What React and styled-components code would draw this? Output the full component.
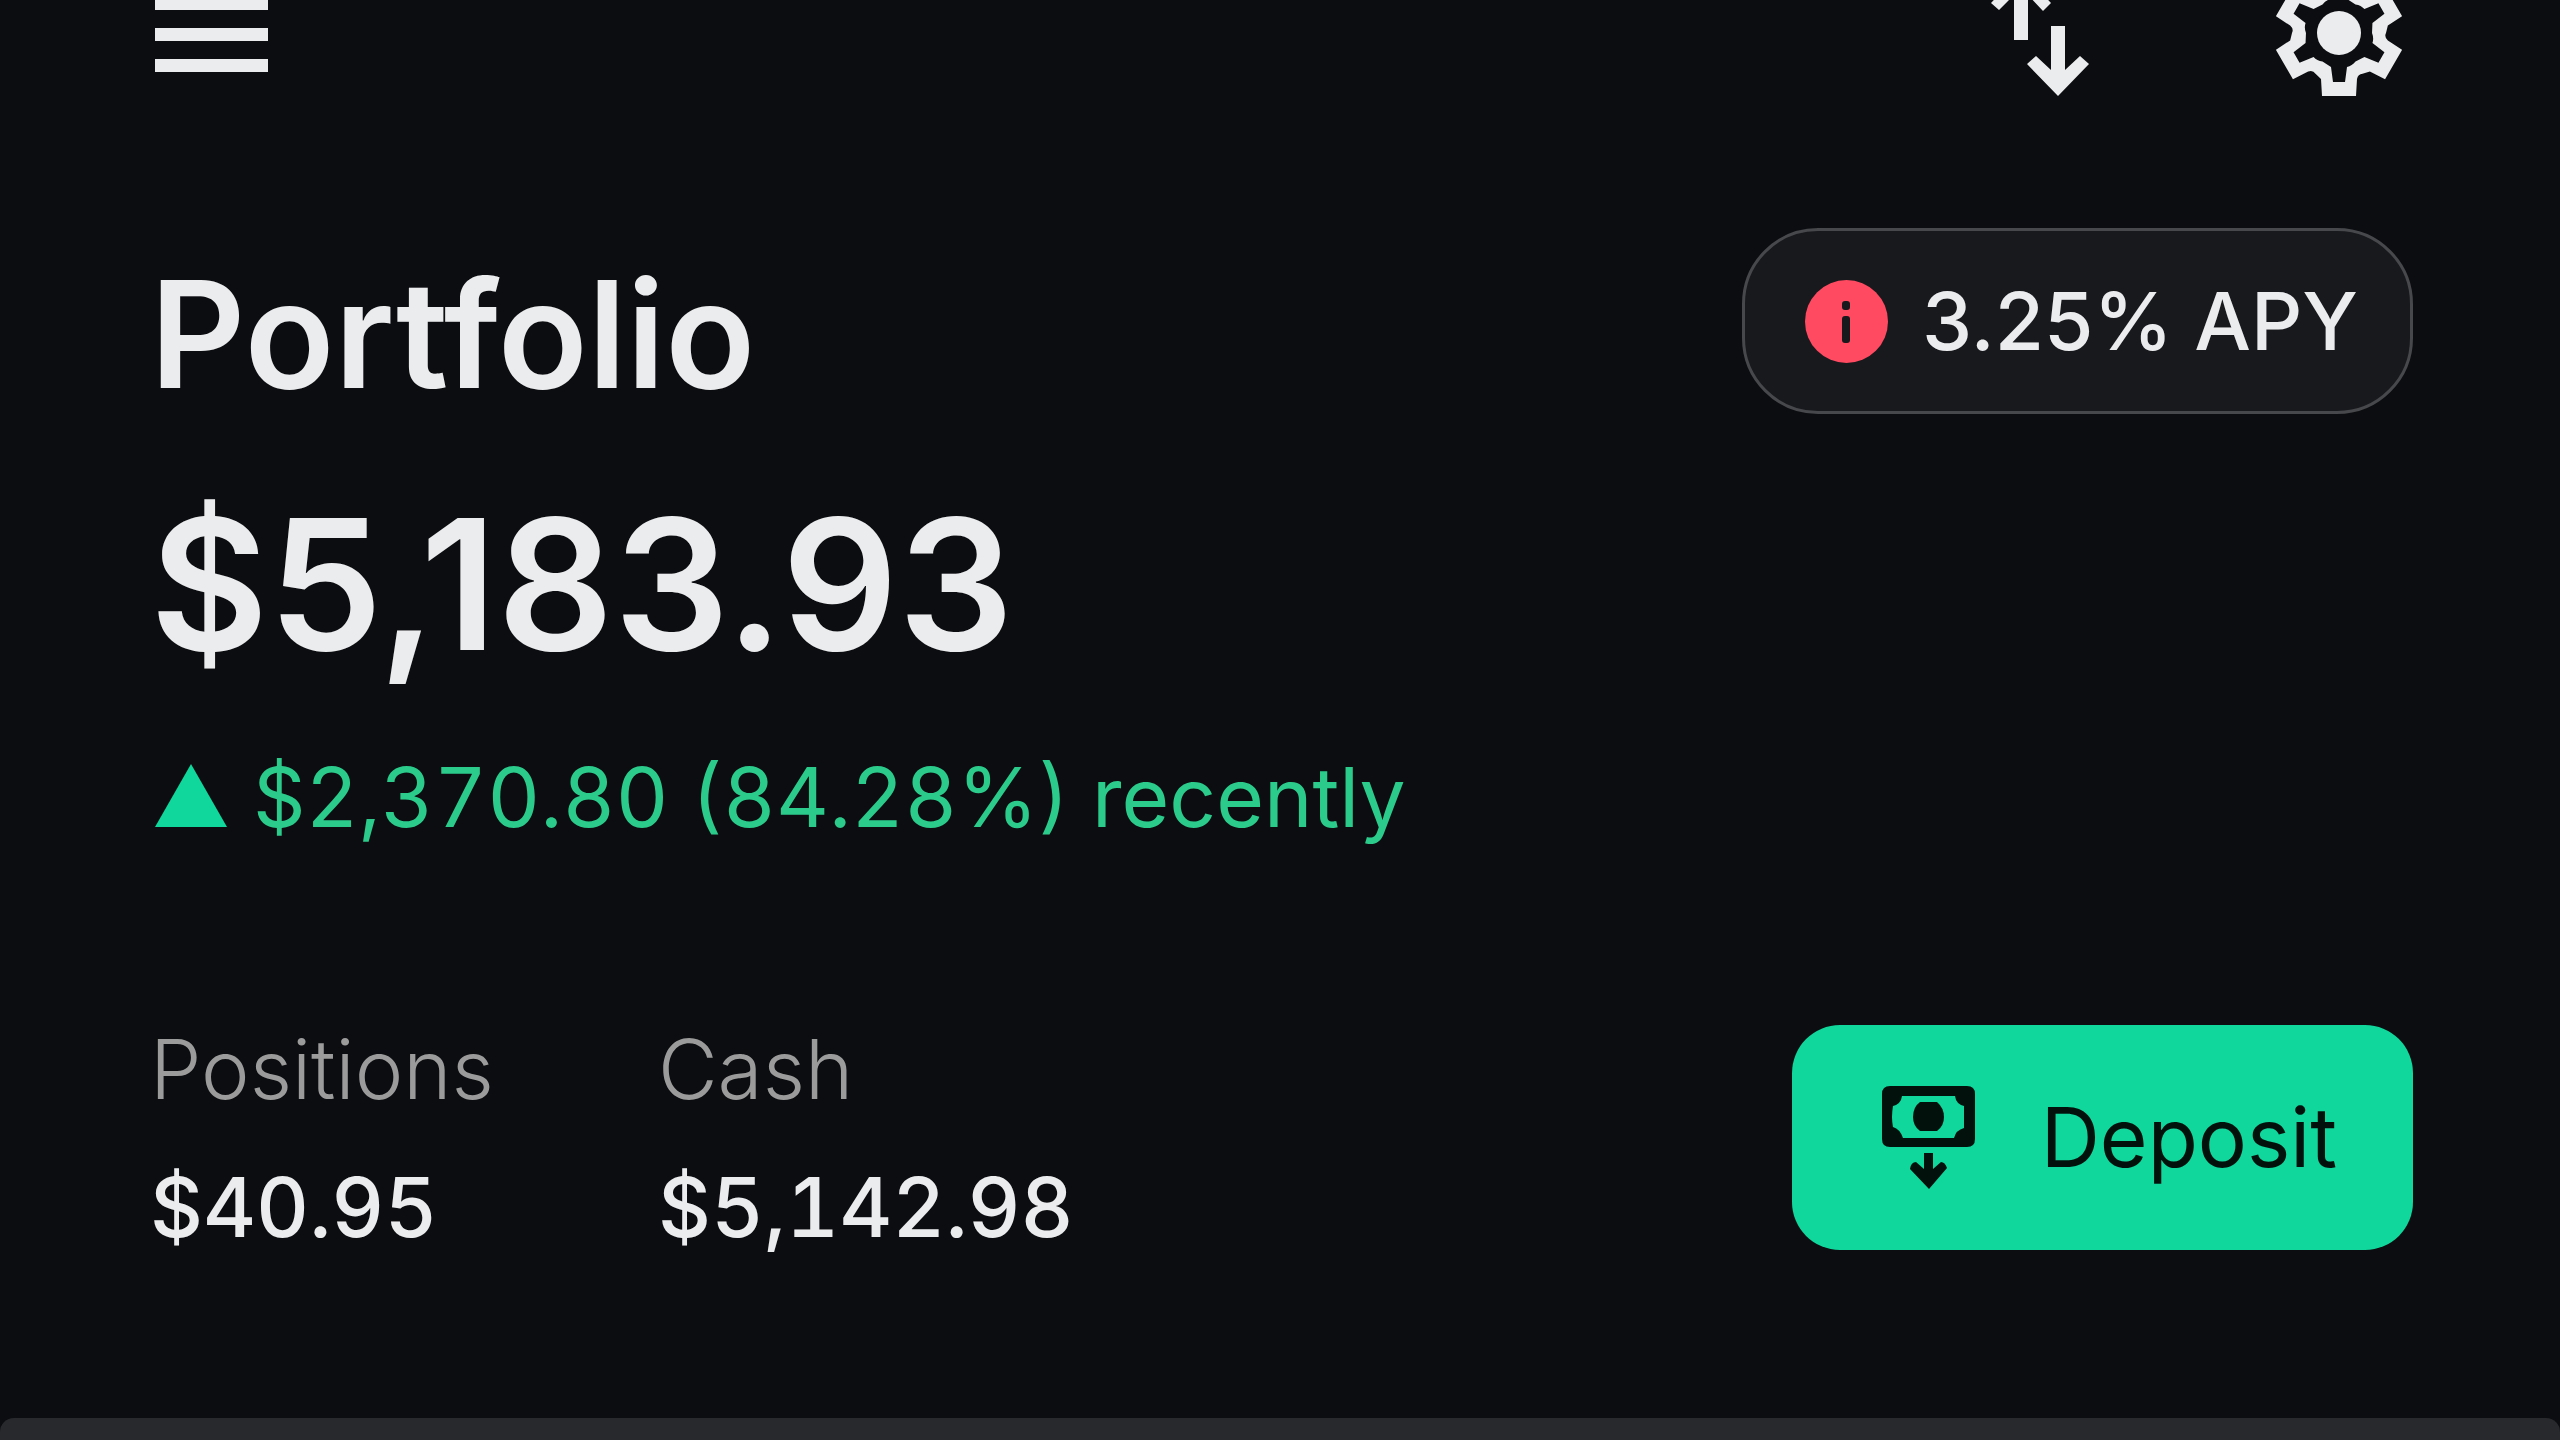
import * as React from 'react'
import styled, { createGlobalStyle } from 'styled-components'

const colors = {
  background: '#0c0d10',
  surface: '#18191d',
  border: '#47484b',
  sheet: '#28292c',
  text: '#ebecee',
  muted: '#9b9b9b',
  green: '#10d79c',
  greenText: '#2bcb8b',
  red: '#ff4a61',
  ink: '#03110c',
}

const fontSizes = {
  small: '80px',
  body: '82px',
  title: '148px',
  amount: '182px',
}

const GlobalStyle = createGlobalStyle`
  * {
    box-sizing: border-box;
  }

  body {
    margin: 0;
    background: ${colors.background};
    color: ${colors.text};
    font-family: Inter, 'Liberation Sans', sans-serif;
    overflow: hidden;
  }
`

const Page = styled.div`
  min-height: 100vh;
  display: flex;
  flex-direction: column;
`

const Header = styled.header`
  display: flex;
  justify-content: space-between;
  align-items: flex-start;
  padding: 0 158px 0 155px;
`

const HeaderActions = styled.div`
  display: flex;
  gap: 186px;
`

const IconButton = styled.button`
  display: block;
  padding: 0;
  border: 0;
  background: none;
  color: ${colors.text};
  cursor: pointer;

  svg {
    display: block;
    fill: currentColor;
  }
`

const Main = styled.main`
  flex: 1;
  padding: 132px 147px 160px 150px;
`

const Row = styled.div`
  display: flex;
  justify-content: space-between;
  align-items: flex-start;
`

const Title = styled.h1`
  margin: 0;
  font-size: ${fontSizes.title};
  font-weight: 600;
  line-height: 214px;
`

const Amount = styled.p`
  margin: 30px 0 54px;
  font-size: ${fontSizes.amount};
  font-weight: 600;
  line-height: 224px;
`

const RateButton = styled.button`
  display: flex;
  align-items: center;
  gap: 34px;
  height: 186px;
  padding: 0 52px 0 60px;
  border: 3px solid ${colors.border};
  border-radius: 76px;
  background: ${colors.surface};
  color: ${colors.text};
  font-family: inherit;
  font-size: ${fontSizes.small};
  font-weight: 500;
  line-height: 96px;
  white-space: nowrap;
  cursor: pointer;
`

const Change = styled.p`
  display: flex;
  align-items: center;
  gap: 26px;
  margin: 0 0 176px;
  padding-left: 5px;
  color: ${colors.greenText};
  font-size: ${fontSizes.body};
  font-weight: 400;
  font-variant-numeric: tabular-nums;
  line-height: 96px;
`

const Holdings = styled.dl`
  display: flex;
  gap: 164px;
  margin: 0;
  font-size: ${fontSizes.body};
  line-height: 96px;
`

const Label = styled.dt`
  color: ${colors.muted};
  font-weight: 300;
`

const Value = styled.dd`
  margin: 42px 0 0;
  font-weight: 500;
  font-variant-numeric: tabular-nums;
`

const DepositButton = styled.button`
  display: flex;
  align-items: center;
  gap: 66px;
  height: 225px;
  margin-top: 3px;
  padding: 0 76px 0 90px;
  border: 0;
  border-radius: 48px;
  background: ${colors.green};
  color: ${colors.ink};
  font-family: inherit;
  font-size: ${fontSizes.body};
  font-weight: 400;
  line-height: 96px;
  cursor: pointer;
`

const Sheet = styled.section`
  height: 22px;
  border-radius: 14px 14px 0 0;
  background: ${colors.sheet};
`

// repeats the points of one tooth around the centre
const around = points =>
  [0, 1, 2, 3, 4, 5]
    .map(step => {
      const angle = (-step * Math.PI) / 3
      const turned = points.map(([cmd, ...xy]) => {
        let out = cmd
        for (let i = 0; i < xy.length; i += 2) {
          const x = xy[i] * Math.cos(angle) - xy[i + 1] * Math.sin(angle)
          const y = xy[i] * Math.sin(angle) + xy[i + 1] * Math.cos(angle)
          out += ` ${x.toFixed(2)} ${y.toFixed(2)}`
        }
        return out
      })
      return turned.join(' ')
    })
    .join(' ')

const gearOuter = around([
  ['L', -18, 46],
  ['L', -17, 63],
  ['L', 17, 63],
  ['L', 18, 46],
  ['Q', 19, 41, 23.5, 40.7],
])

const gearInner = around([
  ['L', -8, 34],
  ['L', -6, 49],
  ['L', 6, 49],
  ['L', 8, 34],
  ['Q', 13, 33, 16.5, 28.6],
])

const MenuIcon = () => (
  <svg width="113" height="72" viewBox="0 0 113 72">
    <rect y="-3" width="113" height="13" />
    <rect y="28" width="113" height="13" />
    <rect y="59" width="113" height="13" />
  </svg>
)

const TransferIcon = () => (
  <svg width="99" height="96" viewBox="0 0 99 96">
    <path d="M23 40V-5L8 10L0 3L30 -29L60 3L52 11L37 -5V40Z" />
    <path d="M60 26H74V70L89 56L98 64L67 96L36 64L45 56L60 70Z" />
  </svg>
)

const SettingsIcon = () => (
  <svg width="126" height="96" viewBox="-63 -33 126 96">
    <path
      fillRule="evenodd"
      d={`M-23.5 40.7 ${gearOuter} Z M-16.5 28.6 ${gearInner} Z`}
    />
    <circle r="22" />
  </svg>
)

const InfoIcon = () => (
  <svg width="83" height="83" viewBox="0 0 83 83">
    <circle cx="41.5" cy="41.5" r="41.5" fill={colors.red} />
    <rect x="37" y="21" width="8" height="9" rx="3" fill={colors.surface} />
    <rect x="37" y="36" width="8" height="27" rx="3" fill={colors.surface} />
  </svg>
)

const UpIcon = () => (
  <svg width="72" height="69" viewBox="0 0 72 69">
    <path d="M36 0L72 63H0Z" fill={colors.green} />
  </svg>
)

const CashIcon = () => (
  <svg width="93" height="103" viewBox="0 0 93 103" fill="currentColor">
    <path
      fillRule="evenodd"
      d="M8 0H85Q93 0 93 8V53Q93 61 85 61H8Q0 61 0 53V8Q0 0 8 0ZM20 10Q19 18 11 20Q9 31 11 41Q18 43 21 52H72Q74 44 82 42V20Q74 18 73 10Z"
    />
    <path d="M38 16H55Q62 22 62 31Q62 40 55 45H38Q31 40 31 31Q31 21 38 16Z" />
    <path d="M42 67H51V83L59 76Q63 76 65 82L47 103L28 83Q29 76 34 76L42 83Z" />
  </svg>
)

const holdings = [
  { label: 'Positions', value: '$40.95' },
  { label: 'Cash', value: '$5,142.98' },
]

const App = () => (
  <Page>
    <GlobalStyle />
    <Header>
      <IconButton aria-label="Menu">
        <MenuIcon />
      </IconButton>
      <HeaderActions>
        <IconButton aria-label="Transfer">
          <TransferIcon />
        </IconButton>
        <IconButton aria-label="Settings">
          <SettingsIcon />
        </IconButton>
      </HeaderActions>
    </Header>
    <Main>
      <Row>
        <Title>Portfolio</Title>
        <RateButton>
          <InfoIcon />
          3.25% APY
        </RateButton>
      </Row>
      <Amount>$5,183.93</Amount>
      <Change>
        <UpIcon />
        $2,370.80 (84.28%) recently
      </Change>
      <Row>
        <Holdings>
          {holdings.map(({ label, value }) => (
            <div key={label}>
              <Label>{label}</Label>
              <Value>{value}</Value>
            </div>
          ))}
        </Holdings>
        <DepositButton>
          <CashIcon />
          Deposit
        </DepositButton>
      </Row>
    </Main>
    <Sheet />
  </Page>
)

export default App
